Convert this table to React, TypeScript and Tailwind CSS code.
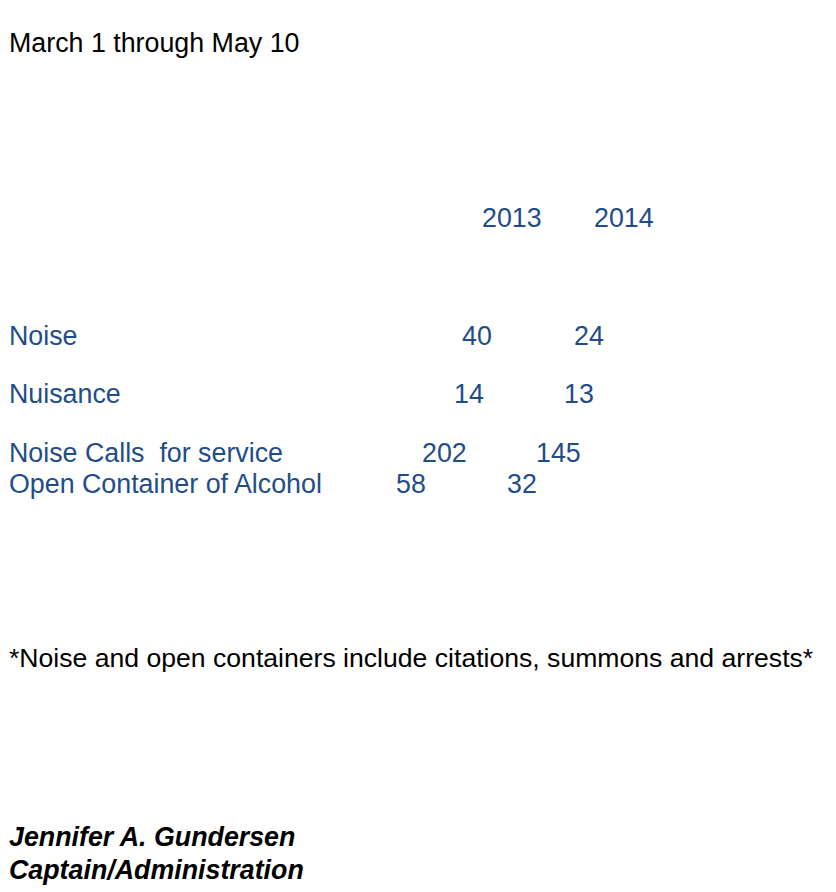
const rows = [
  { label: 'Noise', a: '40', b: '24', w1: 453, w2: 112, mt: 'mt-[88px]' },
  { label: 'Nuisance', a: '14', b: '13', w1: 445, w2: 110, mt: 'mt-[28px]' },
  { label: 'Noise Calls  for service', a: '202', b: '145', w1: 413, w2: 114, mt: 'mt-[29px]' },
  { label: 'Open Container of Alcohol', a: '58', b: '32', w1: 387, w2: 111, mt: 'mt-[1px]' },
]

function App() {
  return (
    <div
      className="min-h-screen w-[836px] h-[892px] overflow-hidden bg-white pl-[9px] pt-[28px] text-[26.8px] leading-[30px]"
      style={{ fontFamily: '"Liberation Sans", Arial, sans-serif' }}
    >
      <p className="text-black">March 1 through May 10</p>

      <div className="mt-[145px] flex text-[#1f4d89]">
        <span className="w-[473px] shrink-0" />
        <span className="w-[112px] shrink-0">2013</span>
        <span>2014</span>
      </div>

      {rows.map((r) => (
        <div key={r.label} className={`flex text-[#1f4d89] ${r.mt}`}>
          <span className="shrink-0 whitespace-pre" style={{ width: r.w1 }}>
            {r.label}
          </span>
          <span className="shrink-0" style={{ width: r.w2 }}>
            {r.a}
          </span>
          <span>{r.b}</span>
        </div>
      ))}

      <p className="mt-[144px] whitespace-nowrap text-[26.6px] text-black">
        *Noise and open containers include citations, summons and arrests*
      </p>

      <div className="mt-[148px] font-bold italic leading-[33px] text-black">
        <p>Jennifer A. Gundersen</p>
        <p>Captain/Administration</p>
      </div>
    </div>
  )
}

export default App
